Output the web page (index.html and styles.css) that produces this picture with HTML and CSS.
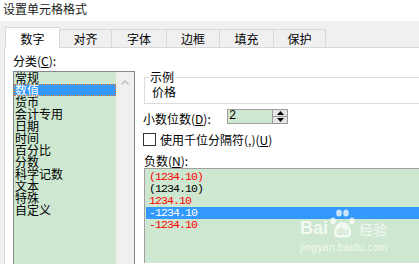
FILE: index.html
```html
<!DOCTYPE html>
<html lang="zh-CN">
<head>
<meta charset="utf-8">
<title>设置单元格格式</title>
<link rel="stylesheet" href="styles.css">
</head>
<body>
<div class="title">设置单元格格式</div>
<div class="tabs">
  <div class="tab active">数字</div>
  <div class="tab">对齐</div>
  <div class="tab">字体</div>
  <div class="tab">边框</div>
  <div class="tab">填充</div>
  <div class="tab">保护</div>
</div>
<div class="panel">
  <div class="left">
    <div class="label">分类(<u>C</u>):</div>
    <div class="catbox">
      <ul class="items">
        <li>常规</li>
        <li class="sel">数值</li>
        <li>货币</li>
        <li>会计专用</li>
        <li>日期</li>
        <li>时间</li>
        <li>百分比</li>
        <li>分数</li>
        <li>科学记数</li>
        <li>文本</li>
        <li>特殊</li>
        <li>自定义</li>
      </ul>
      <div class="vscroll">
        <svg class="arrow" width="8" height="5" viewBox="0 0 8 5"><path d="M0.5 4.5 L4 1 L7.5 4.5" fill="none" stroke="#c3c3c3" stroke-width="1.6"/></svg>
      </div>
    </div>
  </div>
  <div class="right">
    <fieldset class="sample">
      <legend>示例</legend>
      <div class="sample-val">价格</div>
    </fieldset>
    <div class="row dec">
      <span class="dec-label">小数位数(<u>D</u>):</span>
      <div class="spin">
        <span class="spin-val">2</span>
        <div class="spin-btns">
          <div class="sb"><svg width="7" height="4" viewBox="0 0 7 4"><path d="M0 4 L3.5 0 L7 4Z" fill="#000"/></svg></div>
          <div class="sb"><svg width="7" height="4" viewBox="0 0 7 4"><path d="M0 0 L3.5 4 L7 0Z" fill="#000"/></svg></div>
        </div>
      </div>
    </div>
    <div class="row chk">
      <span class="box"></span>
      <span>使用千位分隔符(,)(<u>U</u>)</span>
    </div>
    <div class="label neg-label">负数(<u>N</u>):</div>
    <div class="negbox">
      <div class="neg red">(1234.10)</div>
      <div class="neg">(1234.10)</div>
      <div class="neg red">1234.10</div>
      <div class="neg sel">-1234.10</div>
      <div class="neg red">-1234.10</div>
    </div>
  </div>
</div>
<div class="watermark">
  <div class="wm-top">
    <span class="wm-bai">Bai</span>
    <svg class="wm-paw" width="28" height="30" viewBox="0 0 28 30">
      <ellipse cx="4" cy="13" rx="2.6" ry="3.4" fill="rgba(255,255,255,0.75)"/>
      <ellipse cx="10" cy="5" rx="2.8" ry="3.6" fill="rgba(255,255,255,0.75)"/>
      <ellipse cx="17" cy="5" rx="2.8" ry="3.6" fill="rgba(255,255,255,0.75)"/>
      <ellipse cx="23" cy="13" rx="2.6" ry="3.4" fill="rgba(255,255,255,0.75)"/>
      <path d="M5 26 C5 18 9 14 13.5 14 C18 14 22 18 22 26 C22 29 19 29.5 13.5 29.5 C8 29.5 5 29 5 26Z" fill="rgba(255,255,255,0.75)"/>
      <text x="13.5" y="27" text-anchor="middle" font-family="Liberation Sans, sans-serif" font-size="10" font-weight="bold" fill="#cde6cf">du</text>
    </svg>
    <span class="wm-jy">经验</span>
  </div>
  <div class="wm-url">jingyan.baidu.com</div>
</div>
</body>
</html>
```
FILE: styles.css
```css
html, body {
  margin: 0;
  padding: 0;
  width: 419px;
  height: 264px;
  overflow: hidden;
}
body {
  background: #f0f0f0;
  font-family: "Noto Sans CJK SC", "Noto Sans", sans-serif;
  font-size: 12px;
  color: #000;
  position: relative;
}
u {
  text-decoration: underline;
  text-underline-offset: 1px;
}
.title {
  height: 21px;
  line-height: 18px;
  padding-left: 3px;
  background: #fff;
  color: #1a1a1a;
}
.tabs {
  height: 26px;
  display: flex;
  align-items: flex-end;
  padding-left: 5px;
}
.tab {
  box-sizing: border-box;
  height: 18px;
  line-height: 17px;
  text-align: center;
  border: 1px solid #d9d9d9;
  border-bottom: none;
  background: #f0f0f0;
  margin-left: -1px;
}
.tab:nth-child(1) { width: 55px; margin-left: 0; }
.tab:nth-child(2) { width: 53px; }
.tab:nth-child(3) { width: 56px; }
.tab:nth-child(4) { width: 54px; }
.tab:nth-child(5) { width: 55px; }
.tab:nth-child(6) { width: 53px; }
.tab.active {
  height: 21px;
  line-height: 21px;
  background: #fff;
  margin-bottom: -1px;
  position: relative;
  z-index: 1;
}
.panel {
  margin-left: 4px;
  border-left: 1px solid #d9d9d9;
  border-top: 1px solid #d9d9d9;
  background: #fff;
  height: 217px;
  box-sizing: border-box;
  padding: 6px 0 0 8px;
  display: grid;
  grid-template-columns: 122px 275px;
  column-gap: 9px;
  align-items: start;
  overflow: hidden;
}
.label {
  line-height: 14px;
  height: 14px;
}
.left .label {
  margin-bottom: 3px;
}
.catbox {
  display: flex;
  border: 1px solid #828790;
  border-bottom: none;
  height: 193px;
  box-sizing: border-box;
}
.items {
  list-style: none;
  margin: 0;
  padding: 0;
  width: 102px;
  background: #cde7d0;
}
.items li {
  height: 12px;
  line-height: 12px;
  padding-left: 1px;
  white-space: nowrap;
}
.items li.sel {
  background: #3399ff;
  color: #fff;
  outline: 1px dotted #f07a3a;
  outline-offset: -1px;
}
.vscroll {
  width: 18px;
  background: #f0f0f0;
  display: flex;
  justify-content: center;
  align-items: flex-start;
}
.arrow {
  margin-top: 8px;
}
.sample {
  margin: 17px 0 0 0;
  padding: 0 4px 4px 4px;
  border: 1px solid #dcdcdc;
  border-right: none;
  min-width: 0;
}
.sample legend {
  padding: 0 1px;
  line-height: 12px;
  height: 12px;
}
.sample-val {
  margin-top: 2px;
  padding-left: 3px;
  line-height: 14px;
}
.row {
  display: flex;
  align-items: center;
}
.dec {
  margin-top: 5px;
  height: 15px;
  margin-left: -1px;
}
.dec-label {
  width: 84px;
  line-height: 14px;
  padding-top: 5px;
}
.spin {
  display: flex;
  height: 15px;
  box-sizing: border-box;
  border: 1px solid #a0a0a0;
  border-right: none;
}
.spin-val {
  width: 44px;
  background: #cde7d0;
  font-family: "Liberation Mono", monospace;
  font-size: 12px;
  line-height: 13px;
  padding-left: 1px;
  box-sizing: border-box;
}
.spin-btns {
  width: 16px;
  display: flex;
  flex-direction: column;
  border: 1px solid #9a9a9a;
  margin-top: -1px;
  height: 15px;
  box-sizing: border-box;
  background: #e6e6e6;
}
.sb {
  flex: 1;
  display: flex;
  justify-content: center;
  align-items: center;
}
.sb + .sb {
  border-top: 1px solid #9a9a9a;
}
.chk {
  margin-top: 9px;
  height: 13px;
  margin-left: -1px;
  line-height: 13px;
}
.box {
  width: 13px;
  height: 13px;
  box-sizing: border-box;
  border: 1px solid #333;
  background: #fff;
  margin-right: 4px;
  flex: none;
}
.neg-label {
  margin-top: 8px;
}
.negbox {
  margin-top: 0;
  height: 95px;
  box-sizing: border-box;
  border-left: 1px solid #a0a0a0;
  border-top: 1px solid #a0a0a0;
  background: #cde7d0;
  padding: 2px 0 0 1px;
}
.neg {
  height: 12px;
  line-height: 12px;
  padding-left: 3px;
  font-family: "Liberation Mono", monospace;
  font-size: 11.5px;
  letter-spacing: -0.9px;
}
.neg.red {
  color: #f00;
}
.neg.sel {
  background: #3399ff;
  color: #fff;
}
.watermark {
  position: absolute;
  left: 300px;
  top: 206px;
  display: flex;
  flex-direction: column;
  color: rgba(255, 255, 255, 0.75);
}
.wm-top {
  display: flex;
  align-items: flex-end;
  height: 32px;
}
.wm-bai {
  font-family: "Liberation Sans", sans-serif;
  font-weight: bold;
  font-size: 18px;
  line-height: 18px;
  margin-bottom: 1px;
}
.wm-paw {
  margin-left: 1px;
}
.wm-jy {
  font-size: 14px;
  line-height: 16px;
  margin-left: 2px;
  margin-bottom: 1px;
}
.wm-url {
  font-family: "Liberation Sans", sans-serif;
  font-size: 10.5px;
  line-height: 12px;
  margin-top: 3px;
  letter-spacing: 0.2px;
}
```
